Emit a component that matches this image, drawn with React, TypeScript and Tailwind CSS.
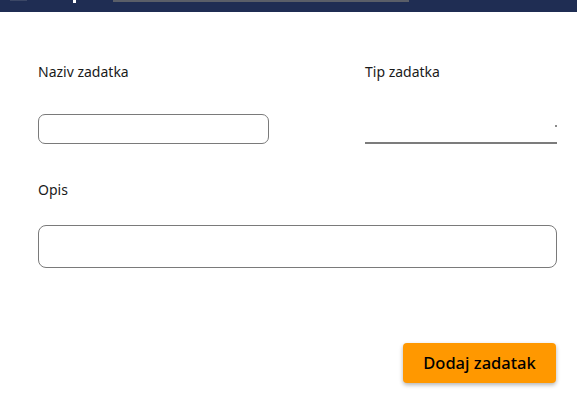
import React from 'react';

const App: React.FC = () => {
  return (
    <div className="w-[577px] h-[403px] bg-white overflow-hidden flex flex-col" style={{ fontFamily: '"Noto Sans", "Open Sans", sans-serif' }}>
      {/* top bar, cut off */}
      <div className="h-[12px] bg-[#1f2d53] relative shrink-0">
        <div className="absolute left-[10px] top-0 w-[17px] h-[1px] bg-[#3b4766]" />
        <div className="absolute left-[73px] top-0 w-[3px] h-[3px] bg-white" />
        <div className="absolute left-[113px] top-0 w-[296px] h-[2px] bg-[#5a5e68]" />
      </div>

      <div className="flex-1 flex">
        <div className="flex-1 px-[38px] pt-[50px] flex flex-col">
          <div className="grid grid-cols-[230px_192px] justify-between">
            <div className="flex flex-col">
              <label className="text-[14px] leading-[20px] text-[#1a1a1a]">Naziv zadatka</label>
              <input className="mt-[32px] h-[30px] w-[231px] rounded-[7px] border border-[#7a7a7a] outline-none px-2" />
            </div>
            <div className="flex flex-col">
              <label className="text-[14px] leading-[20px] text-[#1a1a1a]">Tip zadatka</label>
              <div className="mt-[32px] h-[30px] border-b-2 border-[#7c7c7c] relative">
                <span className="absolute right-0 top-[11px] w-[2px] h-[2px] bg-[#8a8a8a]" />
              </div>
            </div>
          </div>

          <label className="mt-[36px] text-[14px] leading-[20px] text-[#1a1a1a]">Opis</label>
          <textarea className="mt-[25px] h-[43px] w-[519px] resize-none rounded-[8px] border border-[#7a7a7a] outline-none px-2" />

          <div className="mt-[75px] flex justify-end pr-[1px]">
            <button className="w-[153px] h-[40px] rounded-[4px] bg-[#ff9800] text-black text-[16.5px] font-medium shadow-[0_2px_4px_rgba(0,0,0,0.3)]">
              Dodaj zadatak
            </button>
          </div>
        </div>
        <div className="w-[2px] bg-[#1f2d53]" />
      </div>
    </div>
  );
};

export default App;
